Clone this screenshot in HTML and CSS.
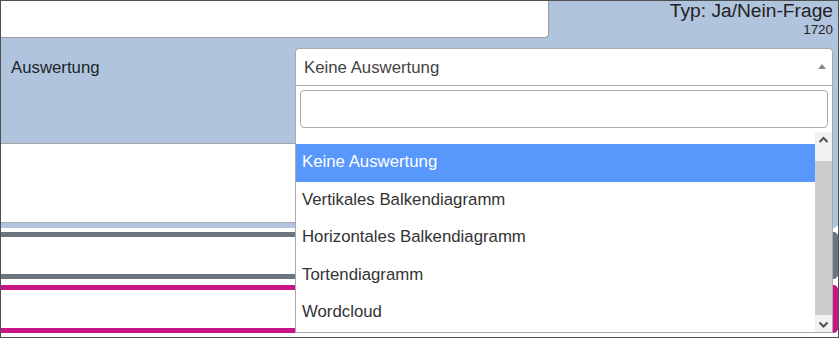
FILE: index.html
```html
<!DOCTYPE html>
<html lang="de">
<head>
<meta charset="utf-8">
<title>Frage</title>
<link rel="stylesheet" href="styles.css">
</head>
<body>
<div class="frame">
  <div class="card card-blue">
    <div class="head">
      <div class="title-input"></div>
      <div class="type">
        <div class="type-name">Typ: Ja/Nein-Frage</div>
        <div class="type-id">1720</div>
      </div>
    </div>
    <div class="eval-row">
      <label class="eval-label">Auswertung</label>
      <div class="select-wrap">
        <div class="select">
          <span class="select-text">Keine Auswertung</span>
          <span class="select-arrow"></span>
        </div>
        <div class="dropdown">
          <div class="search-wrap"><div class="search"></div></div>
          <div class="results">
            <ul class="options">
              <li class="option"></li>
              <li class="option hl">Keine Auswertung</li>
              <li class="option">Vertikales Balkendiagramm</li>
              <li class="option">Horizontales Balkendiagramm</li>
              <li class="option">Tortendiagramm</li>
              <li class="option">Wordcloud</li>
            </ul>
            <div class="scrollbar">
              <div class="sb-btn sb-up">
                <svg width="17" height="17" viewBox="0 0 17 17"><polyline points="4.5,10 8.5,6 12.5,10" fill="none" stroke="#505050" stroke-width="2"/></svg>
              </div>
              <div class="sb-thumb"></div>
              <div class="sb-btn sb-down">
                <svg width="17" height="17" viewBox="0 0 17 17"><polyline points="4.5,7.5 8.5,11.5 12.5,7.5" fill="none" stroke="#505050" stroke-width="2"/></svg>
              </div>
            </div>
          </div>
        </div>
      </div>
    </div>
    <div class="card-body"></div>
  </div>
  <div class="card card-gray"></div>
  <div class="card card-pink"></div>
</div>
</body>
</html>
```
FILE: styles.css
```css
* { box-sizing: border-box; margin: 0; padding: 0; }
html, body { margin: 0; background: #fff; }
body {
  font-family: "Liberation Sans", Arial, sans-serif;
  width: 839px;
  height: 338px;
  overflow: hidden;
}
.frame {
  width: 839px;
  height: 338px;
  border: 1px solid #4f4f4f;
  overflow: hidden;
  display: flex;
  flex-direction: column;
}
.card { flex: none; background: #fff; }
.card-blue {
  border-right: 5px solid #b0c4de;
  border-bottom: 5px solid #b0c4de;
  border-bottom-right-radius: 5px;
}
.head {
  height: 37px;
  display: flex;
  justify-content: space-between;
  background: #b0c4de;
}
.title-input {
  width: 548px;
  height: 37px;
  background: #fff;
  border-right: 1px solid #9a9a9a;
  border-bottom: 1px solid #9a9a9a;
  border-bottom-right-radius: 4px;
}
.type {
  text-align: right;
  color: #222;
}
.type-name { font-size: 19.2px; line-height: 1; }
.type-id { font-size: 13.4px; line-height: 1; margin-top: 2.4px; }
.eval-row {
  height: 106px;
  background: #b0c4de;
  border-bottom: 1px solid #a0a4a8;
  display: grid;
  grid-template-columns: 294px 1fr;
  padding-top: 10px;
}
.eval-label {
  padding-left: 10px;
  padding-top: 1px;
  font-size: 16.8px;
  line-height: 38px;
  color: #212529;
}
.select-wrap { position: relative; }
.select {
  position: relative;
  height: 38px;
  border: 1px solid #aaa;
  border-radius: 4px 4px 0 0;
  background: #fff;
  padding: 1px 0 0 8px;
  font-size: 16.8px;
  line-height: 35px;
  color: #444;
}
.select-arrow {
  position: absolute;
  right: 6px;
  top: 15px;
  width: 0;
  height: 0;
  border-style: solid;
  border-width: 0 4px 5px 4px;
  border-color: transparent transparent #888 transparent;
}
.dropdown {
  position: absolute;
  top: 38px;
  left: 0;
  width: 538px;
  height: 247px;
  background: #fff;
  border: 1px solid #aaa;
  border-top: none;
  z-index: 5;
  display: flex;
  flex-direction: column;
}
.search-wrap { padding: 4px; }
.search {
  height: 38px;
  border: 1px solid #aaa;
  border-radius: 4px;
  background: #fff;
}
.results {
  position: relative;
  flex: 1;
  overflow: hidden;
}
.options {
  list-style: none;
  margin-top: -25.5px;
  margin-right: 17px;
}
.option {
  height: 37.5px;
  padding: 0 6px 1px 6px;
  font-size: 16.8px;
  line-height: 36.5px;
  color: #333;
  white-space: nowrap;
}
.option.hl { background: #5897fb; color: #fff; }
.scrollbar {
  position: absolute;
  top: 0;
  right: 0;
  bottom: 0;
  width: 17px;
  background: #f1f1f1;
}
.sb-btn { position: absolute; left: 0; width: 17px; height: 17px; }
.sb-btn svg { display: block; }
.sb-up { top: 0; }
.sb-down { bottom: 0; }
.sb-thumb {
  position: absolute;
  left: 0;
  top: 29px;
  width: 17px;
  height: 154px;
  background: #cdcdcd;
}
.card-body {
  height: 79px;
  border-bottom: 1px solid #a3adb8;
  background: #fff;
}
.card-gray {
  margin-top: 4px;
  height: 47px;
  border-top: 5px solid #6c757d;
  border-right: 5px solid #6c757d;
  border-bottom: 5px solid #6c757d;
  border-radius: 0 5px 5px 0;
}
.card-pink {
  margin-top: 6px;
  height: 48px;
  border-top: 5px solid #c71585;
  border-right: 5px solid #c71585;
  border-bottom: 5px solid #c71585;
  border-radius: 0 5px 5px 0;
}
```
